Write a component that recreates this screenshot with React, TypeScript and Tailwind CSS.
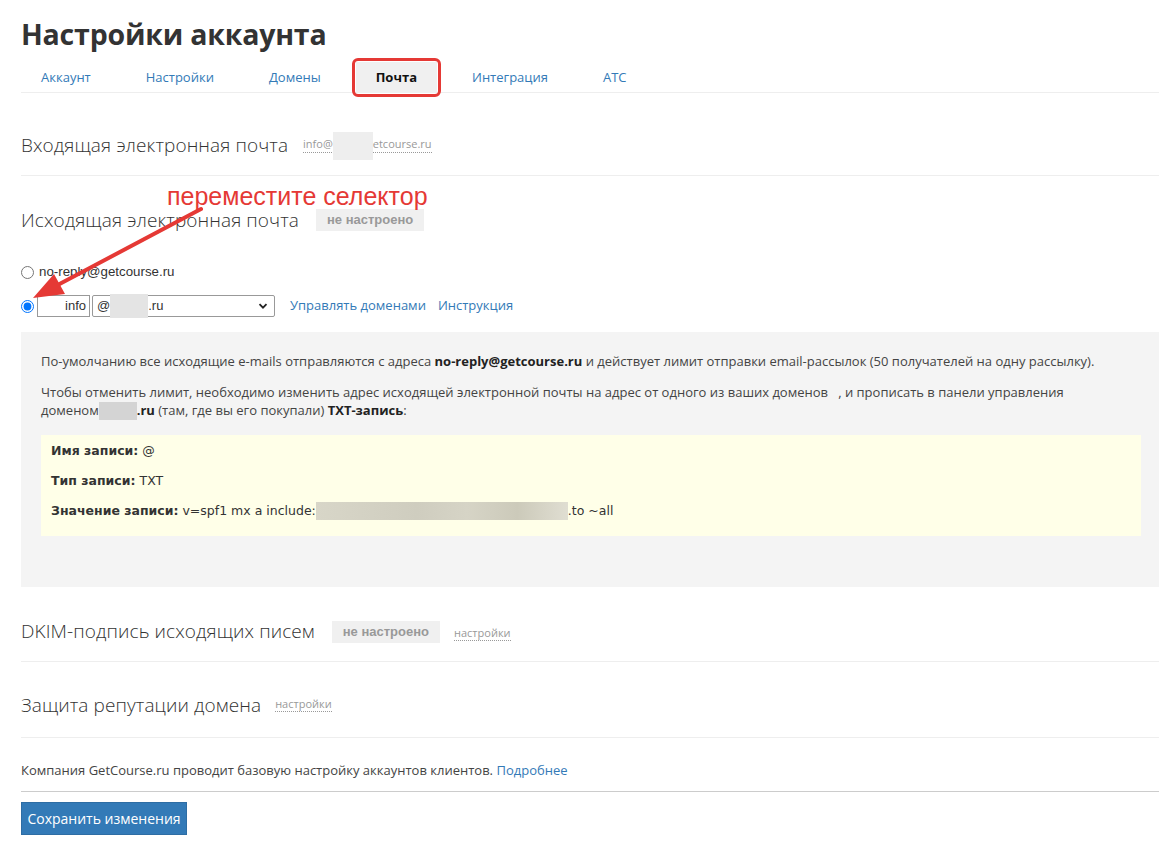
import React from 'react';

const blue = 'text-[#337ab7]';

const Blur = ({ className }: { className: string }) => (
  <span className={`inline-block align-middle ${className}`} />
);

const Badge = () => (
  <span className="inline-flex items-center h-[22px] px-[11px] bg-[#f0f0f0] text-[#999] text-[13px] font-bold font-['Liberation_Sans',Arial,sans-serif]">
    не настроено
  </span>
);

const DotLink = ({ children }: { children: React.ReactNode }) => (
  <span className="text-[11px] text-[#999] border-b border-dotted border-[#999] leading-[14px]">{children}</span>
);

const tabs = ['Аккаунт', 'Настройки', 'Домены', 'Почта', 'Интеграция', 'АТС'];

const heading = 'text-[19px] font-light leading-[26px] tracking-[0.1px]';

const App = () => {
  return (
    <div className="relative min-h-screen bg-white text-[#333] font-['Open_Sans',sans-serif] pl-[21px] overflow-hidden">
      <h1 className="mt-[14px] h-[40px] leading-[40px] text-[28.5px] font-bold text-[#333] tracking-[-0.2px]">
        Настройки аккаунта
      </h1>

      {/* tabs */}
      <div className="mt-[8px] flex gap-[15px] border-b border-[#eee] h-[31px]">
        {tabs.map((t) =>
          t === 'Почта' ? (
            <div key={t} className="relative h-[31px] px-5 flex items-center bg-[#f0f0f0] text-[13px] font-bold text-[#111]">
              {t}
              <span className="absolute -left-[4px] -right-[4px] -top-[4px] -bottom-[4px] border-[3px] border-[#e53935] rounded-[6px]" />
            </div>
          ) : (
            <div key={t} className={`h-[31px] px-5 flex items-center text-[13px] ${blue}`}>
              {t}
            </div>
          )
        )}
      </div>

      {/* incoming */}
      <div className="pt-[39px] pb-[17px] border-b border-[#eee] flex items-center gap-[15px]">
        <span className={heading}>Входящая электронная почта</span>
        <DotLink>
          info@
          <Blur className="w-[40px] h-[28px] -my-[8px] bg-[#eeeeee]" />
          etcourse.ru
        </DotLink>
      </div>

      {/* outgoing */}
      <div className="pt-[31px] flex items-center gap-[17px]">
        <span className={heading}>Исходящая электронная почта</span>
        <Badge />
      </div>

      <div className="mt-[31px] flex items-center h-[16px] gap-[5px] font-['Liberation_Sans',Arial,sans-serif] text-[13.3px]">
        <input type="radio" name="from" className="m-0 w-[13px] h-[13px]" />
        <span>no-reply@getcourse.ru</span>
      </div>

      <div className="mt-[15px] flex items-center h-[22px]">
        <input type="radio" name="from" defaultChecked className="m-0 w-[13px] h-[13px]" />
        <div className="ml-[3px] w-[53px] h-[22px] border border-[#999] flex items-center justify-end pr-[3px] font-['Liberation_Sans',Arial,sans-serif] text-[13px]">
          info
        </div>
        <div className="ml-[2px] w-[183px] h-[22px] border border-[#999] rounded-[2px] flex items-center pl-[4px] pr-[6px] font-['Liberation_Sans',Arial,sans-serif] text-[13px]">
          <span>@</span>
          <Blur className="w-[38px] h-[24px] bg-[#e4e4e4]" />
          <span>.ru</span>
          <svg className="ml-auto" width="10" height="10" viewBox="0 0 10 10">
            <path d="M1.5 3.2 L5 6.7 L8.5 3.2" fill="none" stroke="#222" strokeWidth="1.8" />
          </svg>
        </div>
        <span className={`ml-[15px] text-[13px] ${blue}`}>Управлять доменами</span>
        <span className={`ml-[12px] text-[13px] ${blue}`}>Инструкция</span>
      </div>

      {/* info box */}
      <div className="mt-[15px] bg-[#f4f4f4] pt-[20px] pl-[20px] pr-[18px] pb-[51px] text-[13px] text-[#444] leading-[18px]">
        <p>
          По-умолчанию все исходящие e-mails отправляются с адреса <b className="text-[#222]">no-reply@getcourse.ru</b> и
          действует лимит отправки email-рассылок (50 получателей на одну рассылку).
        </p>
        <p className="mt-[13px]">
          Чтобы отменить лимит, необходимо изменить адрес исходящей электронной почты на адрес от одного из ваших доменов
          &nbsp;&nbsp;, и прописать в панели управления
          <br />
          доменом
          <Blur className="w-[38px] h-[18px] -mt-[2px] bg-[#d4d4d4]" />
          <b className="text-[#222]">.ru</b> (там, где вы его покупали) <b className="text-[#222]">TXT-запись</b>:
        </p>
        <div className="mt-[15px] bg-[#ffffe8] pt-[6px] pb-[5px] pl-[10px] font-['DejaVu_Sans',Verdana,sans-serif] text-[12.5px] text-[#333]">
          <div className="leading-[20px] mb-[10px]">
            <b>Имя записи:</b> @
          </div>
          <div className="leading-[20px] mb-[10px]">
            <b>Тип записи:</b> TXT
          </div>
          <div className="leading-[20px] mb-[10px] flex items-center">
            <b>Значение записи:</b>&nbsp;v=spf1 mx a include:
            <span className="inline-block w-[252px] h-[18px] bg-[linear-gradient(90deg,#d8d6c8,#cfcdbf_40%,#d6d4c6_60%,#cccaba_80%,#e0ded2)]" />
            .to ~all
          </div>
        </div>
      </div>

      {/* dkim */}
      <div className="pt-[31px] pb-[17px] border-b border-[#eee] flex items-center">
        <span className={heading}>DKIM-подпись исходящих писем</span>
        <span className="ml-[17px]">
          <Badge />
        </span>
        <span className="ml-[14px]">
          <DotLink>настройки</DotLink>
        </span>
      </div>

      {/* reputation */}
      <div className="pt-[30px] pb-[19px] border-b border-[#eee] flex items-center gap-[14px]">
        <span className={heading}>Защита репутации домена</span>
        <DotLink>настройки</DotLink>
      </div>

      <div className="pt-[22px] pb-[11px] border-b border-[#ccc] text-[13px] leading-[20px] text-[#444]">
        Компания GetCourse.ru проводит базовую настройку аккаунтов клиентов. <span className={blue}>Подробнее</span>
      </div>

      <button className="mt-[10px] h-[33px] w-[166px] bg-[#337ab7] border border-[#2e6da4] text-white text-[14px]">
        Сохранить изменения
      </button>

      {/* annotation overlay */}
      <div className="absolute left-[167px] top-[181px] text-[25px] leading-[30px] text-[#e53935] font-['Liberation_Sans',Arial,sans-serif]">
        переместите селектор
      </div>
      <svg className="absolute left-0 top-0 pointer-events-none" width="260" height="320" viewBox="0 0 260 320">
        <line x1="201" y1="209" x2="52" y2="288" stroke="#e53935" strokeWidth="4" strokeLinecap="round" />
        <polygon points="33,298 65,294 54,274" fill="#e53935" />
      </svg>
    </div>
  );
};

export default App;
